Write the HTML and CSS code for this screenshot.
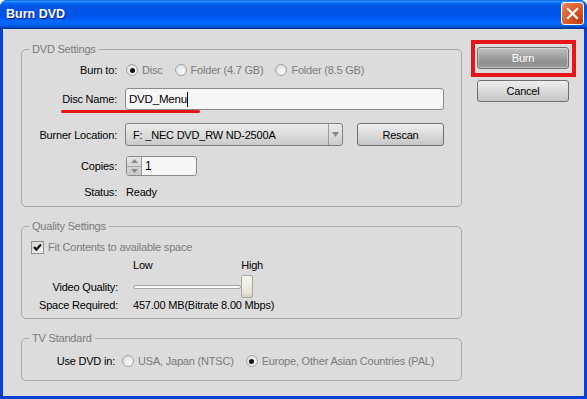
FILE: index.html
```html
<!DOCTYPE html>
<html lang="en">
<head>
  <meta charset="UTF-8">
  <title>Burn DVD</title>
  <link rel="stylesheet" href="styles.css">
</head>
<body>
  <div class="window">
    <!-- Title bar -->
    <div class="titlebar">
      <span class="title">Burn DVD</span>
      <button class="close" aria-label="Close">
        <svg width="13" height="13" viewBox="0 0 13 13">
          <path d="M2 2 L11 11 M11 2 L2 11" stroke="#fff" stroke-width="2.2" stroke-linecap="square"/>
        </svg>
      </button>
    </div>

    <div class="client">
      <div class="groups">
        <!-- DVD settings -->
        <fieldset class="group group-dvd">
          <legend>DVD Settings</legend>
          <div class="row row-burnto">
            <span class="label">Burn to:</span>
            <label class="option first"><span class="radio checked"></span>Disc</label>
            <label class="option"><span class="radio"></span>Folder (4.7 GB)</label>
            <label class="option"><span class="radio"></span>Folder (8.5 GB)</label>
          </div>
          <div class="row row-discname">
            <span class="label">Disc Name:</span>
            <div class="textbox">DVD_Menu<span class="caret"></span></div>
            <span class="scribble"></span>
          </div>
          <div class="row row-burner">
            <span class="label">Burner Location:</span>
            <div class="combo">
              <span class="combo-text">F: _NEC DVD_RW ND-2500A</span>
              <span class="combo-arrow">
                <svg width="7" height="5" viewBox="0 0 7 5"><path d="M0 0 H7 L3.5 5 Z" fill="#8a8a8a"/></svg>
              </span>
            </div>
            <button class="btn btn-rescan">Rescan</button>
          </div>
          <div class="row row-copies">
            <span class="label">Copies:</span>
            <div class="spinner">
              <span class="spin-arrows">
                <span class="spin-up"><svg width="7" height="4" viewBox="0 0 7 4"><path d="M0 4 H7 L3.5 0 Z" fill="#8a8a8a"/></svg></span>
                <span class="spin-down"><svg width="7" height="4" viewBox="0 0 7 4"><path d="M0 0 H7 L3.5 4 Z" fill="#8a8a8a"/></svg></span>
              </span>
              <span class="spin-value">1</span>
            </div>
          </div>
          <div class="row row-status">
            <span class="label">Status:</span>
            <span class="value">Ready</span>
          </div>
        </fieldset>

        <!-- Quality settings -->
        <fieldset class="group group-quality">
          <legend>Quality Settings</legend>
          <div class="row row-fit">
            <span class="checkbox">
              <svg width="11" height="11" viewBox="0 0 11 11"><path d="M2 5 L4.3 7.6 L9 2.4" fill="none" stroke="#111" stroke-width="2.2"/></svg>
            </span>
            Fit Contents to available space
          </div>
          <div class="row row-scale">
            <span>Low</span>
            <span>High</span>
          </div>
          <div class="row row-slider">
            <span class="label">Video Quality:</span>
            <div class="slider">
              <span class="track"></span>
              <span class="thumb"></span>
            </div>
          </div>
          <div class="row row-space">
            <span class="label">Space Required:</span>
            <span>457.00 MB(Bitrate 8.00 Mbps)</span>
          </div>
        </fieldset>

        <!-- TV standard -->
        <fieldset class="group group-tv">
          <legend>TV Standard</legend>
          <div class="row row-tv">
            <span class="label">Use DVD in:</span>
            <label class="option"><span class="radio"></span>USA, Japan (NTSC)</label>
            <label class="option"><span class="radio checked"></span>Europe, Other Asian Countries (PAL)</label>
          </div>
        </fieldset>
      </div>

      <div class="actions">
        <div class="burn-frame">
          <button class="btn btn-burn">Burn</button>
        </div>
        <button class="btn btn-cancel">Cancel</button>
      </div>
    </div>
  </div>
</body>
</html>
```

FILE: styles.css
```css
* {
  box-sizing: border-box;
}

body {
  margin: 0;
  font-family: "Liberation Sans", Arial, sans-serif;
  font-size: 11px;
  letter-spacing: -0.2px;
  color: #000;
  background: #fff;
}

.window {
  width: 587px;
  height: 399px;
  display: flex;
  flex-direction: column;
  background: #0841d6;
  border-radius: 7px 7px 0 0;
  overflow: hidden;
}

/* Title bar */
.titlebar {
  height: 29px;
  flex: none;
  display: flex;
  justify-content: space-between;
  align-items: flex-start;
  padding: 0 3px 0 6px;
  background: linear-gradient(180deg, #0058ee 0%, #3593ff 4%, #288eff 6%, #127dff 8%, #036ffc 10%, #0262ee 14%, #0057e5 20%, #0054e3 24%, #0055eb 56%, #005bf5 66%, #026afe 76%, #0062ef 86%, #0052d6 92%, #0040ab 96%, #003092 100%);
}

.title {
  margin-top: 7px;
  color: #fff;
  font-weight: bold;
  font-size: 12.5px;
  letter-spacing: 0;
  text-shadow: 1px 1px #0f1a89;
}

.close {
  width: 23px;
  height: 23px;
  margin-top: 2px;
  padding: 0;
  display: flex;
  align-items: center;
  justify-content: center;
  border: 1px solid #fff;
  border-radius: 3px;
  background: radial-gradient(circle at 85% 85%, #c23b10 0%, #dd5a28 50%, #e27650 80%, #f0a88a 100%);
}

/* Client area */
.client {
  flex: 1;
  margin: 0 3px 3px;
  display: flex;
  align-items: flex-start;
  padding: 11px 0 0 18px;
  background: #dcdcdc;
}

.groups {
  width: 441px;
  padding-top: 2px;
}

.group {
  margin: 0;
  padding: 0 0 6px;
  min-width: 0;
  border: 1px solid #a9a9a9;
  border-radius: 5px;
}

.group + .group {
  margin-top: 12px;
}

.group legend {
  margin-left: 7px;
  padding: 0 3px;
  line-height: 14px;
  color: #7b7b7b;
}

.row {
  display: flex;
  align-items: center;
}

.label {
  flex: none;
  text-align: right;
}

.group-dvd .label {
  width: 95px;
  margin-right: 8px;
}

.group-quality .label {
  width: 96px;
  margin-right: 15px;
}

.group-tv .label {
  width: 93px;
  margin-right: 7px;
}

/* radio options */
.option {
  display: flex;
  align-items: center;
  margin-right: 12px;
  color: #7b7b7b;
}

.option.first {
  margin-left: 1px;
}

.radio {
  width: 12px;
  height: 12px;
  margin-right: 4px;
  display: flex;
  align-items: center;
  justify-content: center;
  border: 1px solid #a2a2a2;
  border-radius: 50%;
  background: radial-gradient(circle at 65% 65%, #fbfbfb 0%, #e6e6e6 60%, #d2d2d2 100%);
}

.radio.checked::after {
  content: "";
  width: 5px;
  height: 5px;
  border-radius: 50%;
  background: #111;
}

/* DVD settings rows */
.row-burnto {
  margin-top: 4px;
  height: 20px;
}

.row-discname {
  position: relative;
  margin-top: 8px;
  height: 22px;
}

.row-burner {
  margin-top: 13px;
  height: 23px;
}

.row-copies {
  margin-top: 10px;
  height: 20px;
}

.row-status {
  margin-top: 8px;
  height: 16px;
}

.row-status .value {
  margin-left: 1px;
}

.textbox {
  width: 319px;
  height: 22px;
  display: flex;
  align-items: center;
  padding: 0 3px;
  border: 1px solid #8b8b8b;
  border-radius: 3px;
  background: #f6f6f6;
  font-size: 11.5px;
}

.caret {
  width: 1px;
  height: 15px;
  background: #000;
}

/* red annotation stroke under the label */
.scribble {
  position: absolute;
  left: 39px;
  top: 22px;
  width: 139px;
  height: 3px;
  border-radius: 2px;
  background: #e5141b;
}

.combo {
  width: 218px;
  height: 23px;
  display: flex;
  border: 1px solid #7f7f7f;
  border-radius: 3px;
  background: linear-gradient(#ececec, #cbcbcb);
}

.combo-text {
  flex: 1;
  display: flex;
  align-items: center;
  padding-left: 7px;
}

.combo-arrow {
  width: 14px;
  display: flex;
  align-items: center;
  justify-content: center;
  border-left: 1px solid #9c9c9c;
}

.btn {
  height: 23px;
  padding: 0;
  display: flex;
  align-items: center;
  justify-content: center;
  border: 1px solid #707070;
  border-radius: 3px;
  background: linear-gradient(#efefef, #c6c6c6);
  font: inherit;
  letter-spacing: inherit;
  color: #000;
}

.btn-rescan {
  width: 87px;
  margin-left: 14px;
}

.spinner {
  width: 71px;
  height: 20px;
  margin-left: 1px;
  display: flex;
  overflow: hidden;
  border: 1px solid #8b8b8b;
  border-radius: 3px;
  background: #f6f6f6;
}

.spin-arrows {
  width: 15px;
  display: flex;
  flex-direction: column;
  border-right: 1px solid #9a9a9a;
  background: linear-gradient(#e6e6e6, #c8c8c8);
}

.spin-up,
.spin-down {
  flex: 1;
  display: flex;
  align-items: center;
  justify-content: center;
}

.spin-up {
  border-bottom: 1px solid #a8a8a8;
}

.spin-value {
  display: flex;
  align-items: center;
  padding-left: 3px;
  font-size: 12px;
}

/* Quality settings rows */
.row-fit {
  margin-top: 7px;
  height: 14px;
  padding-left: 9px;
  color: #7b7b7b;
}

.checkbox {
  width: 13px;
  height: 13px;
  margin-right: 4px;
  display: flex;
  align-items: center;
  justify-content: center;
  border: 1px solid #8f8f8f;
  background: linear-gradient(135deg, #d6d6d0, #f4f4f0);
}

.row-scale {
  margin: 4px 0 0 111px;
  width: 130px;
  height: 14px;
  justify-content: space-between;
}

.row-slider {
  margin-top: 3px;
  height: 23px;
}

.slider {
  width: 120px;
  height: 23px;
  display: flex;
  align-items: center;
}

.track {
  flex: 1;
  height: 4px;
  border: 1px solid #a4a4a4;
  border-radius: 2px;
  background: #fbfbf6;
}

.thumb {
  width: 12px;
  height: 23px;
  border: 1px solid #a8a89c;
  border-radius: 2px;
  background: linear-gradient(#f6f5ee, #e8e6da 80%, #cfcdbf);
}

.row-space {
  height: 14px;
}

/* TV standard */
.group-tv {
  padding-bottom: 12px;
}

.row-tv {
  margin-top: 9px;
  height: 14px;
}

/* Buttons on the right */
.actions {
  width: 105px;
  margin-left: 9px;
  display: flex;
  flex-direction: column;
}

.burn-frame {
  padding: 3px 3px 4px 2px;
  border: 4px solid #e8141b;
}

.btn-burn {
  width: 92px;
  height: 22px;
  color: #fff;
  background: linear-gradient(#c2c2c2, #8e8e8e 70%, #9c9c9c);
  box-shadow: inset 0 0 0 1px rgba(255, 255, 255, 0.35);
}

.btn-cancel {
  width: 92px;
  height: 22px;
  margin: 3px 0 0 6px;
}
```
